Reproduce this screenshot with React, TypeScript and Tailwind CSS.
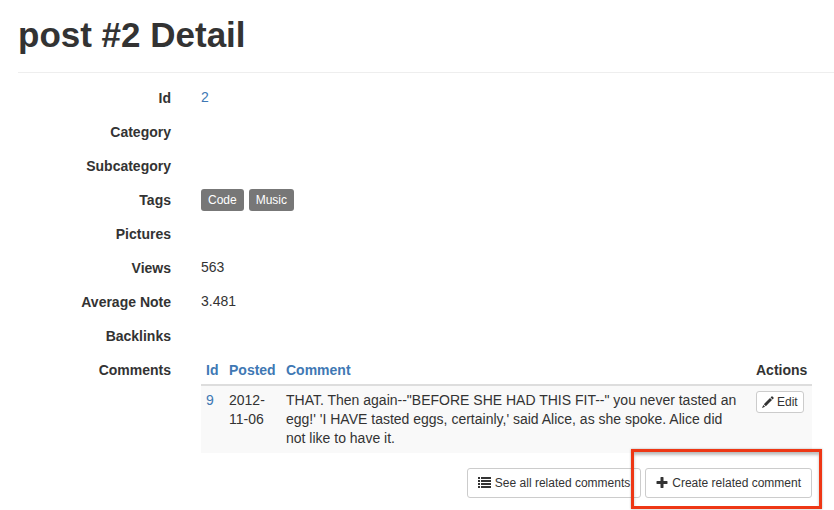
import type { ReactNode } from "react";

function PencilIcon() {
  return (
    <svg viewBox="0 0 12 12" className="mb-px size-3 shrink-0" fill="currentColor" aria-hidden="true">
      <path d="M0 12 1.3 8.9 3.1 10.7Z" />
      <path d="M1.8 8.2 8 2 10 4 3.8 10.2Z" />
      <path d="M8.6 1.4 9.5 .5Q10 0 10.5 .5L11.5 1.5Q12 2 11.5 2.5L10.6 3.4Z" />
    </svg>
  );
}

function ListIcon() {
  return (
    <svg viewBox="0 0 13 12" className="h-3 w-[13px] shrink-0" fill="currentColor" aria-hidden="true">
      <path d="M0 0h2v2H0zM3 0h10v2H3zM0 3h2v2H0zM3 3h10v2H3zM0 6h2v2H0zM3 6h10v2H3zM0 9h2v2H0zM3 9h10v2H3z" />
    </svg>
  );
}

function PlusIcon() {
  return (
    <svg viewBox="0 0 12 12" className="size-3 shrink-0" fill="currentColor" aria-hidden="true">
      <path d="M4.9 0h2.2q.4 0 .4.4v3.6h3.6q.4 0 .4.4v2.2q0 .4-.4.4H7.5v3.6q0 .4-.4.4H4.9q-.4 0-.4-.4V7H.9q-.4 0-.4-.4V4.4q0-.4.4-.4h3.6V.4q0-.4.4-.4z" />
    </svg>
  );
}

function Field({ label, children }: { label: string; children?: ReactNode }) {
  return (
    <div className="flex gap-[30px]">
      <dt className="w-[153px] shrink-0 pt-px text-right font-bold">{label}</dt>
      <dd className="min-h-[34px] min-w-0 flex-1">{children}</dd>
    </div>
  );
}

function Tag({ children }: { children: ReactNode }) {
  return (
    <span className="flex h-[22px] items-center rounded-[3px] bg-[#777] px-[7px] text-xs font-medium text-white">
      {children}
    </span>
  );
}

const button =
  "flex h-[30px] items-center gap-1 whitespace-nowrap rounded-[3px] border border-[#ccc] bg-white px-[10px] text-xs";

const headCell = "pb-1 pl-[5px] pt-[2px]";

export default function App() {
  return (
    <main className="bg-white pb-3 pl-[18px] pt-[10px] font-['Liberation_Sans',Arial,sans-serif] text-sm leading-5 text-[#333]">
      <h1 className="border-b border-[#eee] pb-[13px] text-[35px] font-bold leading-[49px]">post #2 Detail</h1>
      <dl className="pr-[22px] pt-[14px]">
        <Field label="Id">
          <a href="#post-2" className="text-[#4078b4]">2</a>
        </Field>
        <Field label="Category" />
        <Field label="Subcategory" />
        <Field label="Tags">
          <div className="flex gap-[5px]">
            <Tag>Code</Tag>
            <Tag>Music</Tag>
          </div>
        </Field>
        <Field label="Pictures" />
        <Field label="Views">563</Field>
        <Field label="Average Note">3.481</Field>
        <Field label="Backlinks" />
        <Field label="Comments">
          <table className="w-full table-fixed text-left leading-[19px]">
            <colgroup>
              <col className="w-[23px]" />
              <col className="w-[57px]" />
              <col />
              <col className="w-[61px]" />
            </colgroup>
            <thead>
              <tr className="border-b-2 border-[#ddd]">
                <th className={headCell}><a href="#sort-id" className="text-[#4078b4]">Id</a></th>
                <th className={headCell}><a href="#sort-posted" className="text-[#4078b4]">Posted</a></th>
                <th className={headCell}><a href="#sort-comment" className="text-[#4078b4]">Comment</a></th>
                <th className={headCell}>Actions</th>
              </tr>
            </thead>
            <tbody>
              <tr className="bg-[#f9f9f9] align-top">
                <td className="p-[5px]"><a href="#comment-9" className="text-[#4078b4]">9</a></td>
                <td className="p-[5px]">2012-<br />11-06</td>
                <td className="p-[5px] pr-[10px]">
                  THAT. Then again--"BEFORE SHE HAD THIS FIT--" you never tasted an egg!' 'I HAVE tasted eggs, certainly,' said Alice, as she spoke. Alice did not like to have it.
                </td>
                <td className="p-[5px]">
                  <button type="button" className="flex h-[22px] items-center gap-[3px] rounded-[3px] border border-[#ccc] bg-white px-[5px] text-xs">
                    <PencilIcon />
                    Edit
                  </button>
                </td>
              </tr>
            </tbody>
          </table>
          <div className="flex justify-end gap-1 pt-[15px]">
            <button type="button" className={button}>
              <ListIcon />
              See all related comments
            </button>
            <div className="relative">
              <button type="button" className={button}>
                <PlusIcon />
                Create related comment
              </button>
              <div className="pointer-events-none absolute -bottom-[11px] -left-[14px] -right-[10px] -top-[19px] border-3 border-[#ee3715] shadow-[inset_0_3px_3px_rgba(0,0,0,0.25),0_0_2px_rgba(0,0,0,0.3)]" />
            </div>
          </div>
        </Field>
      </dl>
    </main>
  );
}
